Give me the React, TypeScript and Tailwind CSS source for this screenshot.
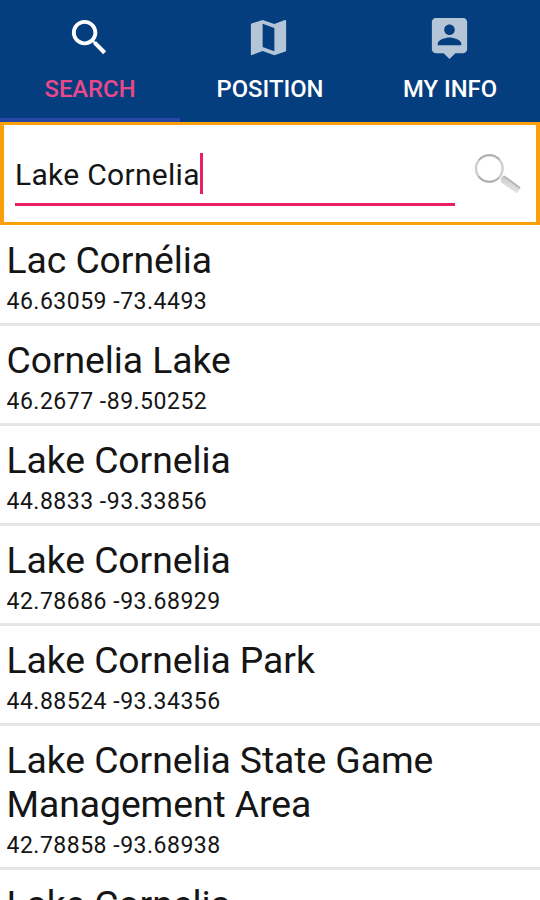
import { useState } from 'react';

interface Place {
  name: string;
  lat: string;
  lon: string;
}

const PLACES: Place[] = [
  { name: 'Lac Cornélia', lat: '46.63059', lon: '-73.4493' },
  { name: 'Cornelia Lake', lat: '46.2677', lon: '-89.50252' },
  { name: 'Lake Cornelia', lat: '44.8833', lon: '-93.33856' },
  { name: 'Lake Cornelia', lat: '42.78686', lon: '-93.68929' },
  { name: 'Lake Cornelia Park', lat: '44.88524', lon: '-93.34356' },
  { name: 'Lake Cornelia State Game Management Area', lat: '42.78858', lon: '-93.68938' },
  { name: 'Lake Cornelia', lat: '42.78691', lon: '-93.68326' },
];

const TABS = [
  {
    label: 'SEARCH',
    icon: 'M15.5 14h-.79l-.28-.27C15.41 12.59 16 11.11 16 9.5 16 5.91 13.09 3 9.5 3S3 5.91 3 9.5 5.91 16 9.5 16c1.61 0 3.09-.59 4.23-1.57l.27.28v.79l5 4.99L20.49 19l-4.99-5zm-6 0C7.01 14 5 11.99 5 9.5S7.01 5 9.5 5 14 7.01 14 9.5 11.99 14 9.5 14z',
  },
  {
    label: 'POSITION',
    icon: 'M20.5 3l-.16.03L15 5.1 9 3 3.36 4.9c-.21.07-.36.25-.36.48V20.5c0 .28.22.5.5.5l.16-.03L9 18.9l6 2.1 5.64-1.9c.21-.07.36-.25.36-.48V3.5c0-.28-.22-.5-.5-.5zM15 19l-6-2.11V5l6 2.11V19z',
  },
  {
    label: 'MY INFO',
    icon: 'M19 2H5c-1.11 0-2 .9-2 2v14c0 1.1.89 2 2 2h4l3 3 3-3h4c1.1 0 2-.9 2-2V4c0-1.1-.9-2-2-2zm-7 3.3c1.49 0 2.7 1.21 2.7 2.7s-1.21 2.7-2.7 2.7S9.3 9.49 9.3 8s1.21-2.7 2.7-2.7zM18 16H6v-.9c0-2 4-3.1 6-3.1s6 1.1 6 3.1v.9z',
  },
];

function MagnifierIcon() {
  return (
    <svg viewBox="0 0 48 42" className="w-12 h-[42px]">
      <defs>
        <linearGradient id="handle" x1="0.3" y1="1" x2="0.7" y2="0">
          <stop offset="0" stopColor="#ececec" />
          <stop offset="0.55" stopColor="#d6d6d6" />
          <stop offset="1" stopColor="#b0b0b0" />
        </linearGradient>
      </defs>
      <path d="M26.5 26L29.5 22.5L46.5 35L43 40.5L27 29.5Z" fill="url(#handle)" />
      <path d="M30 23L46 34.800" stroke="#b0b0b0" strokeWidth="1.5" />
      <circle cx="15.3" cy="15.5" r="13.3" fill="#fff" stroke="#cfcfcf" strokeWidth="2.4" />
      <path d="M5 7A13.5 13.5 0 0 1 25.500 6.500M4.800 23.5A13.5 13.500 0 0 0 25 24.800" fill="none" stroke="#ababab" strokeWidth="1.4" />
    </svg>
  );
}

function App() {
  const [activeTab, setActiveTab] = useState('SEARCH');

  return (
    <div className="h-[900px] w-[540px] flex flex-col overflow-hidden bg-white font-['Roboto',sans-serif] text-[#151515]">
      {/* Tabs */}
      <nav className="grid grid-cols-3 h-[122px] shrink-0 bg-[#053e7e]">
        {TABS.map(tab => {
          const active = tab.label === activeTab;
          return (
            <button
              key={tab.label}
              onClick={() => setActiveTab(tab.label)}
              className={`flex flex-col items-center pt-3.5 border-b-4 ${active ? 'border-[#2746a6]' : 'border-transparent'}`}
            >
              <svg viewBox="0 0 24 24" className={`size-[47px] ${active ? 'fill-white' : 'fill-[#b4c5d8]'} ${tab.label === 'POSITION' ? 'mr-[3px]' : 'mr-px'}`}>
                <path d={tab.icon} />
              </svg>
              <span className={`mt-3.5 text-[23.8px] leading-7 font-medium ${active ? 'text-[#e9488b]' : 'text-white'}`}>
                {tab.label}
              </span>
            </button>
          );
        })}
      </nav>

      {/* Search box */}
      <div className="flex h-[103px] shrink-0 border-4 border-t-3 border-b-3 border-[#fb9f0b] pl-[11px] pr-3.5 justify-between">
        <div className="w-[440px] h-[81px] border-b-3 border-[#e91e63] flex items-center pt-5">
          <span className="pt-px text-[30px] leading-9 tracking-[0.3px]">Lake Cornelia</span>
          <span className="w-[3px] h-[41px] -mt-px bg-[#e91e63]" />
        </div>
        <div className="pt-7">
          <MagnifierIcon />
        </div>
      </div>

      {/* Results */}
      <ul className="pt-px">
        {PLACES.map((place, index) => (
          <li key={index} className="border-b-3 border-[#e6e6e6] pt-3 pb-2 pl-[6.5px] pr-2">
            <h2 className="text-[37.3px] leading-[44px] tracking-[-0.06px]">{place.name}</h2>
            <p className="mt-1.5 text-[23px] leading-[27px] tracking-[0.5px]">
              {place.lat} {place.lon}
            </p>
          </li>
        ))}
      </ul>
    </div>
  );
}

export default App;
